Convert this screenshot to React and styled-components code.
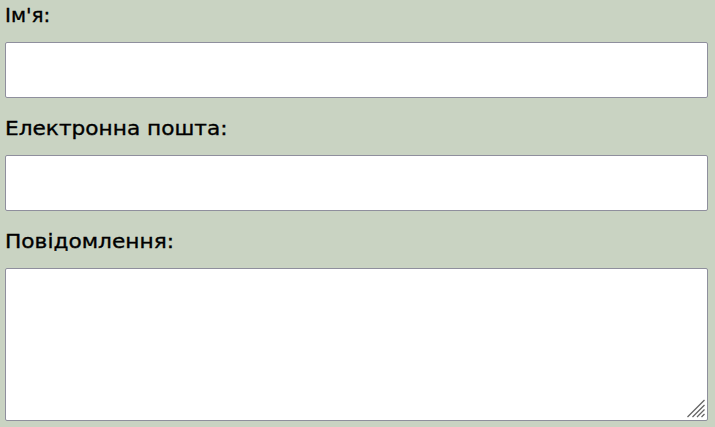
import React from "react";
import styled, { createGlobalStyle } from "styled-components";

const GlobalStyle = createGlobalStyle`
  *, *::before, *::after { box-sizing: border-box; }
  body { margin: 0; background: #c9d3c2; }
`;

const Form = styled.form`
  display: flex;
  flex-direction: column;
  width: 715px;
  height: 427px;
  padding: 0 7px 0 5px;
  overflow: hidden;
  background: #c9d3c2;
  font-family: "DejaVu Sans", sans-serif;
`;

const Field = styled.div`
  display: flex;
  flex-direction: column;
`;

const Label = styled.label`
  height: 42px;
  line-height: 30px;
  font-size: 20px;
  color: #000;
`;

const LabelText = styled.span`
  display: inline-block;
  transform: scaleX(${(p) => p.$stretch});
  transform-origin: left center;
  -webkit-text-stroke: 0.35px #000;
  white-space: nowrap;
`;

const Input = styled.input`
  height: 56px;
  margin: 0 0 15px;
  padding: 0 10px;
  border: 1px solid #8f8f9d;
  border-radius: 2px;
  background: #fff;
  outline: none;
`;

const TextArea = styled.textarea`
  display: block;
  width: 100%;
  height: 153px;
  margin: 0;
  border: 1px solid #8f8f9d;
  border-radius: 2px;
  background: #fff;
  resize: none;
  outline: none;
`;

const AreaFrame = styled.div`
  position: relative;
`;

const Grip = styled.svg`
  position: absolute;
  right: 2px;
  bottom: 2px;
  width: 20px;
  height: 20px;
  pointer-events: none;
`;

export default function App() {
  return (
    <>
      <GlobalStyle />
      <Form>
        <Field>
          <Label htmlFor="name"><LabelText $stretch={1}>Ім'я:</LabelText></Label>
          <Input id="name" />
        </Field>
        <Field>
          <Label htmlFor="email"><LabelText $stretch={1.083}>Електронна пошта:</LabelText></Label>
          <Input id="email" />
        </Field>
        <Field>
          <Label htmlFor="message"><LabelText $stretch={1.085}>Повідомлення:</LabelText></Label>
          <AreaFrame>
            <TextArea id="message" />
            <Grip viewBox="0 0 20 20" fill="none" stroke="#666" strokeWidth="1.3">
              <path d="M1.5 18L18.5 1M6.5 18L18.5 6M11 18L18.5 10.5M15.5 18L18.5 15" />
            </Grip>
          </AreaFrame>
        </Field>
      </Form>
    </>
  );
}
